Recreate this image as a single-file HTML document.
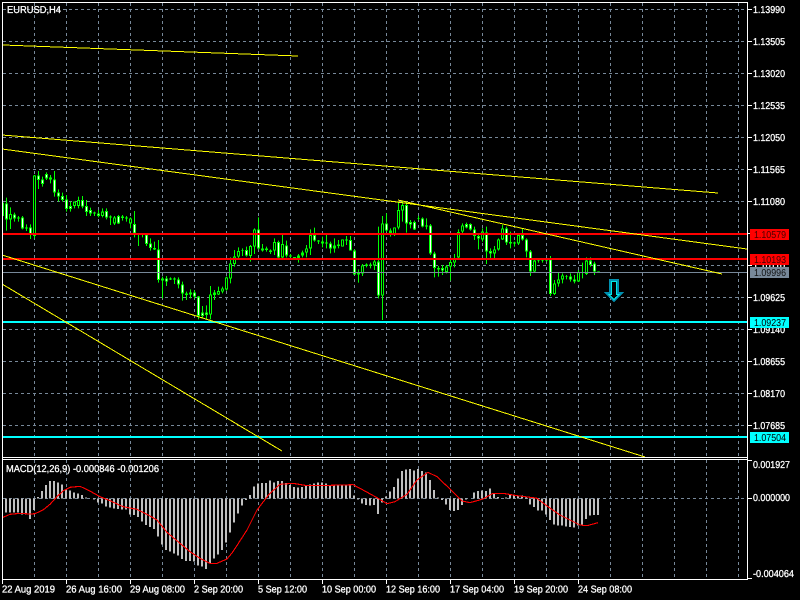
<!DOCTYPE html>
<html><head><meta charset="utf-8"><title>EURUSD,H4</title>
<style>html,body{margin:0;padding:0;background:#000;overflow:hidden}svg{display:block}
text{font-family:"Liberation Sans",sans-serif;font-size:10px;fill:#fff;stroke:#fff;stroke-width:.3px}</style></head>
<body>
<svg width="800" height="600" viewBox="0 0 800 600" xmlns="http://www.w3.org/2000/svg" shape-rendering="crispEdges">
<rect width="800" height="600" fill="#000"/>
<!-- grid -->
<path fill="none" stroke="#778899" stroke-dasharray="3 3" d="M3 9.5H747M3 41.5H747M3 73.5H747M3 105.5H747M3 137.5H747M3 169.5H747M3 201.5H747M3 233.5H747M3 265.5H747M3 297.5H747M3 329.5H747M3 361.5H747M3 393.5H747M3 425.5H747M3 498.5H747"/>
<path fill="none" stroke="#778899" stroke-dasharray="3 3" d="M34.5 3V457M66.5 3V457M98.5 3V457M130.5 3V457M162.5 3V457M194.5 3V457M226.5 3V457M258.5 3V457M290.5 3V457M322.5 3V457M354.5 3V457M386.5 3V457M418.5 3V457M450.5 3V457M482.5 3V457M514.5 3V457M546.5 3V457M578.5 3V457M610.5 3V457M642.5 3V457M674.5 3V457M706.5 3V457M738.5 3V457"/>
<path fill="none" stroke="#778899" stroke-dasharray="3 3" d="M34.5 460V579M66.5 460V579M98.5 460V579M130.5 460V579M162.5 460V579M194.5 460V579M226.5 460V579M258.5 460V579M290.5 460V579M322.5 460V579M354.5 460V579M386.5 460V579M418.5 460V579M450.5 460V579M482.5 460V579M514.5 460V579M546.5 460V579M578.5 460V579M610.5 460V579M642.5 460V579M674.5 460V579M706.5 460V579M738.5 460V579"/>
<!-- candles section 1 -->
<g transform="translate(0 160) scale(1 .33333)" fill="none">
<path stroke="#00ff00" d="M3.5 128V168M6.5 113V212M10.5 142V207M14.5 158V185M18.5 168V185M22.5 168V208M26.5 193V213M30.5 193V237M34.5 45V235M38.5 33V87M42.5 50V80M46.5 37V60M50.5 45V70M54.5 33V110M58.5 88V125M62.5 98V125M66.5 105V155M70.5 125V155M74.5 125V145M78.5 110V145M82.5 108V145M86.5 120V168M90.5 143V168M94.5 155V168M98.5 150V172M102.5 145V172M106.5 145V178M110.5 166V195M114.5 168V195M118.5 165V192M122.5 165V182M126.5 168V185M130.5 172V205M134.5 153V232M138.5 222V258M142.5 222V232M146.5 222V258M150.5 235V272M154.5 245V270M158.5 240V368M162.5 350V415M166.5 348V378M170.5 352V360M174.5 352V372M178.5 352V385M182.5 365V422M186.5 395V420M190.5 388V415M194.5 390V415M198.5 408V478M202.5 438V475M206.5 436V478M210.5 378V478M214.5 390V420M218.5 380V405M222.5 380V400M226.5 350V392M230.5 292V370M234.5 270V320M238.5 262V295M242.5 265V288M246.5 260V290M250.5 255V305M254.5 205V282M258.5 172V268M262.5 252V275M266.5 260V275"/>
<path stroke="#00ff00" stroke-width="3" d="M6.5 130V178M10.5 162V178M14.5 163V175M18.5 172V176M22.5 172V205M26.5 202V205M30.5 202V222M34.5 46V228M38.5 46V60M42.5 58V72M46.5 42V55M50.5 53V58M54.5 58V97M58.5 97V110M62.5 108V120M66.5 118V147M70.5 138V147M74.5 125V138M78.5 120V138M82.5 120V140M86.5 138V156M90.5 150V160M94.5 158V160M98.5 160V168M102.5 155V168M106.5 153V173M110.5 170V172M114.5 172V190M118.5 168V190M122.5 170V174M126.5 172V176M130.5 175V190M134.5 192V220M146.5 224V252M150.5 250V264M154.5 264V268M158.5 268V360M162.5 355V362M166.5 355V365M170.5 355V358M174.5 356V358M178.5 358V373M182.5 373V400M186.5 400V405M190.5 397V403M194.5 397V410M198.5 410V468M202.5 458V468M206.5 458V465M210.5 403V464M214.5 398V405M218.5 393V404M222.5 385V395M226.5 352V388M230.5 310V356M234.5 290V312M238.5 273V290M242.5 270V272M246.5 270V287M250.5 258V288M254.5 208V260M258.5 208V265M262.5 265V272M266.5 265V270"/>
<path stroke="#fff" d="M6.5 133V175M14.5 166V172M22.5 175V202M30.5 205V219M38.5 49V57M42.5 61V69M46.5 45V52M54.5 61V94M58.5 100V107M62.5 111V117M66.5 121V144M70.5 141V144M82.5 123V137M86.5 141V153M90.5 153V157M98.5 163V165M106.5 156V170M118.5 171V187M134.5 195V217M146.5 227V249M150.5 253V261M158.5 271V357M166.5 358V362M178.5 361V370M182.5 376V397M194.5 400V407M198.5 413V465M202.5 461V465M206.5 461V462M246.5 273V284M258.5 211V262"/>
<path stroke="#000" d="M10.5 165V175M34.5 49V225M74.5 128V135M78.5 123V135M102.5 158V165M114.5 175V187M130.5 178V187M210.5 406V461M218.5 396V401M222.5 388V392M226.5 355V385M230.5 313V353M234.5 293V309M238.5 276V287M250.5 261V285M254.5 211V257"/>
</g>
<!-- candles section 2 -->
<g transform="translate(0 180) scale(1 .33333)" fill="none">
<path stroke="#00ff00" d="M270.5 208V222M274.5 175V225M278.5 182V235M282.5 165V235M286.5 182V232M290.5 222V232M294.5 231V234M298.5 222V248M302.5 212V232M306.5 195V232M310.5 148V225M314.5 143V185M318.5 180V192M322.5 170V202M326.5 165V205M330.5 185V220M334.5 175V218M338.5 180V205M342.5 178V200M346.5 168V195M350.5 168V212M354.5 208V285M358.5 268V308M362.5 252V288M366.5 250V262M370.5 248V265M374.5 238V270M378.5 140V355M382.5 108V420M386.5 100V155M390.5 145V170M394.5 142V168M398.5 65V148M402.5 62V125M406.5 65V158M410.5 120V145M414.5 122V150M418.5 108V120M422.5 112V142M426.5 115V148M430.5 132V225M434.5 215V292M438.5 258V290M442.5 255V285M446.5 255V280M450.5 235V302M454.5 222V262M458.5 148V235M462.5 130V165M466.5 128V145M470.5 130V152M474.5 140V180M478.5 165V208M482.5 145V185M486.5 140V252M490.5 205V235M494.5 198V235M498.5 175V212M502.5 135V180M506.5 140V195M510.5 155V205M514.5 185V200M518.5 165V195M522.5 145V182M526.5 175V232M530.5 210V288"/>
<path stroke="#00ff00" stroke-width="3" d="M270.5 212V216M274.5 186V212M278.5 186V232M282.5 192V232M286.5 196V226M290.5 226V230M294.5 231V234M298.5 226V234M302.5 218V226M306.5 205V218M310.5 165V205M314.5 165V182M318.5 182V185M322.5 184V190M326.5 188V190M330.5 190V205M334.5 196V205M338.5 194V198M342.5 178V200M346.5 178V182M350.5 180V212M354.5 212V283M358.5 278V283M362.5 256V280M366.5 254V258M370.5 254V256M374.5 244V256M378.5 245V347M382.5 130V347M386.5 130V152M390.5 152V160M394.5 142V165M398.5 90V143M402.5 75V92M406.5 75V130M410.5 126V134M414.5 126V148M418.5 114V116M422.5 115V140M426.5 136V140M430.5 136V220M434.5 220V264M438.5 264V268M442.5 264V272M446.5 260V276M450.5 246V260M454.5 236V248M458.5 156V232M462.5 136V155M466.5 132V142M470.5 132V148M474.5 148V168M478.5 168V176M482.5 155V178M486.5 158V214M490.5 213V220M494.5 208V220M498.5 178V208M502.5 145V178M506.5 145V188M510.5 186V190M514.5 188V190M518.5 165V190M522.5 165V178M526.5 178V214M530.5 214V275"/>
<path stroke="#fff" d="M278.5 189V229M286.5 199V223M314.5 168V179M322.5 187V187M330.5 193V202M350.5 183V209M354.5 215V280M378.5 248V344M386.5 133V149M406.5 78V127M410.5 129V131M414.5 129V145M422.5 118V137M430.5 139V217M434.5 223V261M442.5 267V269M466.5 135V139M470.5 135V145M474.5 151V165M478.5 171V173M486.5 161V211M490.5 216V217M506.5 148V185M522.5 168V175M526.5 181V211M530.5 217V272"/>
<path stroke="#000" d="M274.5 189V209M282.5 195V229M306.5 208V215M310.5 168V202M342.5 181V197M362.5 259V277M374.5 247V253M382.5 133V344M394.5 145V162M398.5 93V140M402.5 78V89M446.5 263V273M450.5 249V257M454.5 239V245M458.5 159V229M462.5 139V152M482.5 158V175M494.5 211V217M498.5 181V205M502.5 148V175M518.5 168V187"/>
</g>
<!-- candles section 3 -->
<g transform="translate(0 220) scale(1 .33333)" fill="none">
<path stroke="#00ff00" d="M534.5 118V158M538.5 118V128M542.5 118V128M546.5 116V125M550.5 108V228M554.5 180V225M558.5 158V200M562.5 160V190M566.5 165V178M570.5 160V185M574.5 165V190M578.5 150V186M582.5 128V175M586.5 112V165M590.5 112V140M594.5 125V165M598.5 154V158"/>
<path stroke="#00ff00" stroke-width="3" d="M534.5 122V155M538.5 120V122M542.5 120V122M546.5 119V121M550.5 118V222M554.5 190V222M558.5 178V190M562.5 166V178M566.5 168V170M570.5 170V178M574.5 178V185M578.5 156V184M582.5 156V158M586.5 122V162M590.5 122V135M594.5 130V155M598.5 155V158"/>
<path stroke="#fff" d="M550.5 121V219M570.5 173V175M574.5 181V182M590.5 125V132M594.5 133V152"/>
<path stroke="#000" d="M534.5 125V152M554.5 193V219M558.5 181V187M562.5 169V175M578.5 159V181M586.5 125V159"/>
</g>
<!-- horizontal levels -->
<path fill="none" stroke="#778899" d="M3 272.5H747"/>
<path fill="none" stroke="#ff0000" stroke-width="2" d="M3 234H747M3 259H747"/>
<path fill="none" stroke="#00ffff" stroke-width="2" d="M3 322H747M3 437H747"/>
<!-- trend lines -->
<g fill="none" stroke="#ffff00">
<path d="M3 45L298 56"/>
<path d="M2 135L718 193"/>
<path d="M2 149L747 249"/>
<path d="M398 200L722 274"/>
<path d="M2 255L645 457"/>
<path d="M2 284L282 451"/>
</g>
<!-- arrow -->
<path fill="none" stroke="#0090b0" stroke-width="2" d="M610 280H618V293H622L614 301L606 293H610Z"/>
<path fill="none" stroke="#00e8e8" d="M611.5 281.5H616.5V294.5H619L614 299.5L609 294.5H611.5Z"/>
<!-- MACD histogram -->
<g transform="translate(0 455) scale(1 .33333)" fill="none">
<path stroke="#c0c0c0" stroke-width="2" d="M6 130V172M10 130V172M14 130V172M18 130V172M22 130V178M26 130V178M30 130V192M34 130V165M38 130V126M42 130V108M46 130V90M50 130V78M54 130V78M58 130V82M62 130V88M66 130V104M70 130V106M74 130V112M78 130V116M82 130V120M86 130V127M94 130V134M98 130V142M102 130V146M106 130V154M110 130V158M114 130V160M118 130V162M122 130V164M126 130V164M130 130V178M134 130V180M138 130V186M142 130V200M146 130V210M150 130V216M154 130V222M158 130V245M162 130V268M166 130V285M170 130V290M174 130V295M178 130V302M182 130V312M186 130V318M190 130V318M194 130V320M198 130V332M202 130V334M206 130V342M210 130V325M214 130V310M218 130V298M222 130V285M226 130V262M230 130V232M234 130V202M238 130V175M242 130V152M246 130V135M250 130V120M254 130V94M258 130V86M262 130V84M266 130V84M270 130V76M274 130V82M278 130V78M282 130V78M286 130V84M290 130V90M294 130V96M298 130V98M302 130V96M306 130V90M310 130V88M314 130V86M318 130V82M322 130V82M326 130V86M330 130V90M334 130V90M338 130V90M342 130V90M346 130V90M350 130V92M354 130V122M358 130V134M362 130V145M366 130V150M370 130V152M374 130V150M378 130V177M382 130V142M386 130V125M390 130V110M394 130V96M398 130V70M402 130V48M406 130V44M410 130V42M414 130V46M418 130V42M422 130V48M426 130V52M430 130V75M434 130V105M438 130V127M442 130V135M446 130V148M450 130V165M454 130V168M458 130V165M462 130V150M466 130V133M474 130V112M478 130V108M482 130V106M486 130V108M490 130V100M494 130V114M498 130V126M506 130V127M510 130V118M514 130V122M518 130V122M522 130V122M526 130V128M530 130V148M534 130V156M538 130V166M542 130V166M546 130V178M550 130V195M554 130V208M558 130V212M562 130V212M566 130V214M570 130V216M574 130V218M578 130V212M582 130V210M586 130V192M590 130V182M594 130V180M598 130V180"/>
<path stroke="#ff0000" stroke-width="1.1" vector-effect="non-scaling-stroke" d="M3 187L10 178L20 175L30 177L35 176L43 165L50 148L57 125L63 108L70 97L80 94L88 105L100 125L110 137L123 155L137 163L150 183L157 195L167 232L180 265L190 290L200 310L210 325L217 325L227 312L233 290L247 225L257 165L269 118L280 88L293 85L307 92L330 91L353 89L363 105L377 128L387 146L395 140L407 118L417 75L428 52L437 65L450 102L462 138L470 143L483 132L493 115L505 116L517 122L533 128L537 130L547 153L560 180L570 195L580 210L587 212L598 203"/>
</g>
<!-- frames -->
<path fill="none" stroke="#fff" d="M2.5 579.5V2.5H747.5V579.5H2.5M3 457.5H747M3 459.5H747"/>
<!-- ticks -->
<path fill="none" stroke="#fff" d="M747 9.5H752M747 41.5H752M747 73.5H752M747 105.5H752M747 137.5H752M747 169.5H752M747 201.5H752M747 233.5H752M747 265.5H752M747 297.5H752M747 329.5H752M747 361.5H752M747 393.5H752M747 425.5H752M747 460.5H752M747 498.5H752M747 578.5H752M2.5 579V584M66.5 579V584M130.5 579V584M194.5 579V584M258.5 579V584M322.5 579V584M386.5 579V584M450.5 579V584M514.5 579V584M578.5 579V584"/>
<!-- right axis labels -->
<g text-rendering="geometricPrecision">
<text x="753" y="13" textLength="32" lengthAdjust="spacingAndGlyphs">1.13990</text>
<text x="753" y="45" textLength="32" lengthAdjust="spacingAndGlyphs">1.13505</text>
<text x="753" y="77" textLength="32" lengthAdjust="spacingAndGlyphs">1.13020</text>
<text x="753" y="109" textLength="32" lengthAdjust="spacingAndGlyphs">1.12535</text>
<text x="753" y="141" textLength="32" lengthAdjust="spacingAndGlyphs">1.12050</text>
<text x="753" y="173" textLength="32" lengthAdjust="spacingAndGlyphs">1.11565</text>
<text x="753" y="205" textLength="32" lengthAdjust="spacingAndGlyphs">1.11080</text>
<text x="753" y="237" textLength="32" lengthAdjust="spacingAndGlyphs">1.10595</text>
<text x="753" y="269" textLength="32" lengthAdjust="spacingAndGlyphs">1.10110</text>
<text x="753" y="301" textLength="32" lengthAdjust="spacingAndGlyphs">1.09625</text>
<text x="753" y="333" textLength="32" lengthAdjust="spacingAndGlyphs">1.09140</text>
<text x="753" y="365" textLength="32" lengthAdjust="spacingAndGlyphs">1.08655</text>
<text x="753" y="397" textLength="32" lengthAdjust="spacingAndGlyphs">1.08170</text>
<text x="753" y="429" textLength="32" lengthAdjust="spacingAndGlyphs">1.07685</text>
<rect x="750" y="229" width="39" height="11" fill="#ff0000"/>
<rect x="750" y="254" width="39" height="11" fill="#ff0000"/>
<rect x="750" y="267" width="39" height="11" fill="#778899"/>
<rect x="750" y="317" width="39" height="11" fill="#00ffff"/>
<rect x="750" y="432" width="39" height="11" fill="#00ffff"/>
<text x="754" y="238" textLength="32" lengthAdjust="spacingAndGlyphs" style="fill:#400;stroke:none">1.10579</text>
<text x="754" y="263" textLength="32" lengthAdjust="spacingAndGlyphs" style="fill:#400;stroke:none">1.10193</text>
<text x="754" y="276" textLength="32" lengthAdjust="spacingAndGlyphs" style="fill:#111;stroke:none">1.09996</text>
<text x="754" y="326" textLength="32" lengthAdjust="spacingAndGlyphs" style="fill:#000;stroke:none">1.09237</text>
<text x="754" y="441" textLength="32" lengthAdjust="spacingAndGlyphs" style="fill:#000;stroke:none">1.07504</text>
<text x="753" y="468" textLength="37" lengthAdjust="spacingAndGlyphs">0.001927</text>
<text x="753" y="501" textLength="37" lengthAdjust="spacingAndGlyphs">0.000000</text>
<text x="753" y="577" textLength="41" lengthAdjust="spacingAndGlyphs">-0.004064</text>
<!-- titles -->
<text x="7" y="13" textLength="54" lengthAdjust="spacingAndGlyphs">EURUSD,H4</text>
<text x="6" y="472" textLength="153" lengthAdjust="spacingAndGlyphs">MACD(12,26,9) -0.000846 -0.001206</text>
<!-- time labels -->
<text x="2" y="592.5" textLength="53" lengthAdjust="spacingAndGlyphs">22 Aug 2019</text>
<text x="66" y="592.5" textLength="56" lengthAdjust="spacingAndGlyphs">26 Aug 16:00</text>
<text x="130" y="592.5" textLength="55" lengthAdjust="spacingAndGlyphs">29 Aug 08:00</text>
<text x="194" y="592.5" textLength="49" lengthAdjust="spacingAndGlyphs">2 Sep 20:00</text>
<text x="258" y="592.5" textLength="49" lengthAdjust="spacingAndGlyphs">5 Sep 12:00</text>
<text x="322" y="592.5" textLength="54" lengthAdjust="spacingAndGlyphs">10 Sep 00:00</text>
<text x="386" y="592.5" textLength="54" lengthAdjust="spacingAndGlyphs">12 Sep 16:00</text>
<text x="450" y="592.5" textLength="54" lengthAdjust="spacingAndGlyphs">17 Sep 04:00</text>
<text x="514" y="592.5" textLength="54" lengthAdjust="spacingAndGlyphs">19 Sep 20:00</text>
<text x="578" y="592.5" textLength="54" lengthAdjust="spacingAndGlyphs">24 Sep 08:00</text>
</g>
</svg>
</body></html>
